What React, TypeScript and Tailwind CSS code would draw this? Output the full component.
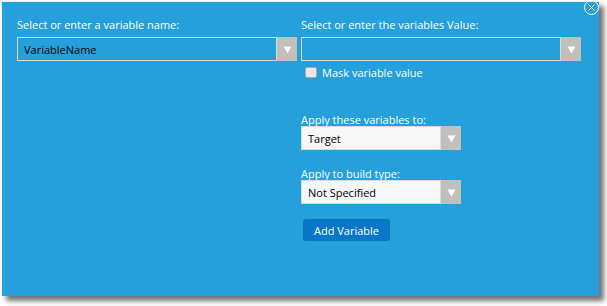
import React from "react";

const Arrow = () => (
  <svg width="9" height="9" viewBox="0 0 9 9">
    <polygon points="0.5,1.5 8.5,1.5 4.5,8.5" fill="#ffffff" />
  </svg>
);

function Select({ w, value, light }: { w: string; value?: string; light?: boolean }) {
  return (
    <div className={`flex h-[24px] ${w}`}>
      <div
        className={`flex-1 flex items-center pl-[6px] border border-[#d9d9d9] ${
          light ? "bg-[#f7f7f7]" : "bg-[#25a0da]"
        } text-black`}
      >
        {value}
      </div>
      <div className="w-[20px] bg-[#c2c0bd] flex items-center justify-center">
        <Arrow />
      </div>
    </div>
  );
}

export default function App() {
  return (
    <div
      className="w-[607px] h-[306px] bg-white relative overflow-hidden text-[11px] leading-none"
      style={{ fontFamily: "'Open Sans', 'Noto Sans', sans-serif" }}
    >
      <div className="ml-[1px] mt-[1px] w-[598px] h-[295px] bg-[#25a0da] border-t border-l border-[#e6f2f8] shadow-[5px_5px_5px_rgba(0,0,0,0.55)] relative flex pt-[17px] pl-[15px] text-white">
        <div className="w-[280px] flex flex-col">
          <div className="h-[18px]">Select or enter a variable name:</div>
          <Select w="w-[280px]" value="VariableName" />
        </div>
        <div className="ml-[4px] flex flex-col">
          <div className="h-[18px]">Select or enter the variables Value:</div>
          <Select w="w-[280px]" />
          <div className="flex items-center mt-[6px] ml-[4px] h-[11px]">
            <div className="w-[12px] h-[11px] rounded-[2px] bg-[#e8e8e8] border border-[#a9a9a9]" />
            <span className="ml-[5px]">Mask variable value</span>
          </div>
          <div className="mt-[36px] h-[12px]">Apply these variables to:</div>
          <Select w="w-[160px]" value="Target" light />
          <div className="mt-[18px] h-[12px]">Apply to build type:</div>
          <Select w="w-[160px]" value="Not Specified" light />
          <div className="mt-[15px] ml-[2px] w-[87px] h-[22px] rounded-[3px] bg-[#0976c8] flex items-center justify-center">
            Add Variable
          </div>
        </div>
        <div className="absolute right-[0px] top-[-2px] w-[15px] h-[15px] rounded-full border border-white flex items-center justify-center">
          <svg width="7" height="7" viewBox="0 0 7 7">
            <path d="M0.5 0.5 L6.5 6.5 M6.5 0.5 L0.5 6.5" stroke="white" strokeWidth="1" />
          </svg>
        </div>
      </div>
    </div>
  );
}
